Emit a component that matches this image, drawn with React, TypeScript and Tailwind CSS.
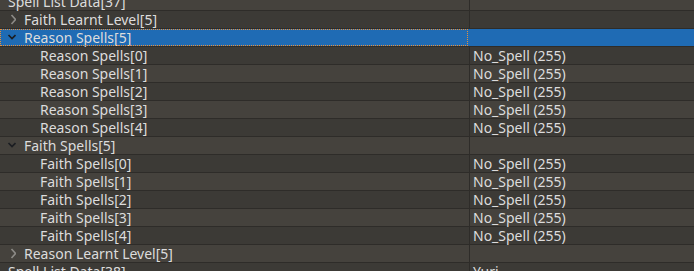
type Row = {
  label: string;
  value?: string;
  depth: number;
  chevron?: "open" | "closed";
  selected?: boolean;
};

const rows: Row[] = [
  { label: "Spell List Data[37]", depth: 0, chevron: "open" },
  { label: "Faith Learnt Level[5]", depth: 1, chevron: "closed" },
  { label: "Reason Spells[5]", depth: 1, chevron: "open", selected: true },
  ...[0, 1, 2, 3, 4].map((i) => ({ label: `Reason Spells[${i}]`, value: "No_Spell (255)", depth: 2 })),
  { label: "Faith Spells[5]", depth: 1, chevron: "open" },
  ...[0, 1, 2, 3, 4].map((i) => ({ label: `Faith Spells[${i}]`, value: "No_Spell (255)", depth: 2 })),
  { label: "Reason Learnt Level[5]", depth: 1, chevron: "closed" },
  { label: "Spell List Data[38]", value: "Yuri", depth: 0, chevron: "open" },
];

function Chevron({ kind }: { kind: "open" | "closed" }) {
  if (kind === "closed") {
    return (
      <svg width="16" height="17" viewBox="0 0 16 17" className="shrink-0">
        <path d="M11.5 4 L15.5 8.5 L11.5 13" fill="none" stroke="#8c8a86" strokeWidth="1.6" />
      </svg>
    );
  }
  return (
    <svg width="16" height="17" viewBox="0 0 16 17" className="shrink-0">
      <path d="M8.5 6 L12 9.5 L15.5 6" fill="none" stroke="#1b1d22" strokeWidth="1.7" />
    </svg>
  );
}

export default function App() {
  return (
    <div
      className="h-[271px] w-[694px] overflow-hidden bg-[#3c3a36] text-[14px] text-[#dcdcdc]"
      style={{ fontFamily: '"Noto Sans", "Open Sans", sans-serif' }}
    >
      <div className="-mt-[7px]">
        {rows.map((r, i) => {
          const bg = r.selected ? "bg-[#1f6bb4]" : i % 2 === 0 ? "bg-[#45423d]" : "bg-[#3c3a36]";
          return (
            <div key={i} className={`flex h-[18px] border-b border-[#2e2c29] ${bg}`}>
              <div
                className={`relative flex w-[470px] shrink-0 items-center border-r border-[#2e2c29] ${
                  r.selected ? "border-r-transparent" : ""
                }`}
              >
                {r.selected && (
                  <div className="pointer-events-none absolute inset-0 right-[1px] border border-dotted border-[#e8903a]" />
                )}
                <div className="flex items-center" style={{ marginLeft: (r.depth - 1) * 16 }}>
                  {r.chevron ? <Chevron kind={r.chevron} /> : <div className="w-4 shrink-0" />}
                  <span className="whitespace-nowrap pl-[8px] leading-[17px]">{r.label}</span>
                </div>
              </div>
              <div className="flex items-center pl-[3px]">
                <span className="whitespace-nowrap leading-[17px]">{r.value ?? ""}</span>
              </div>
            </div>
          );
        })}
      </div>
    </div>
  );
}
